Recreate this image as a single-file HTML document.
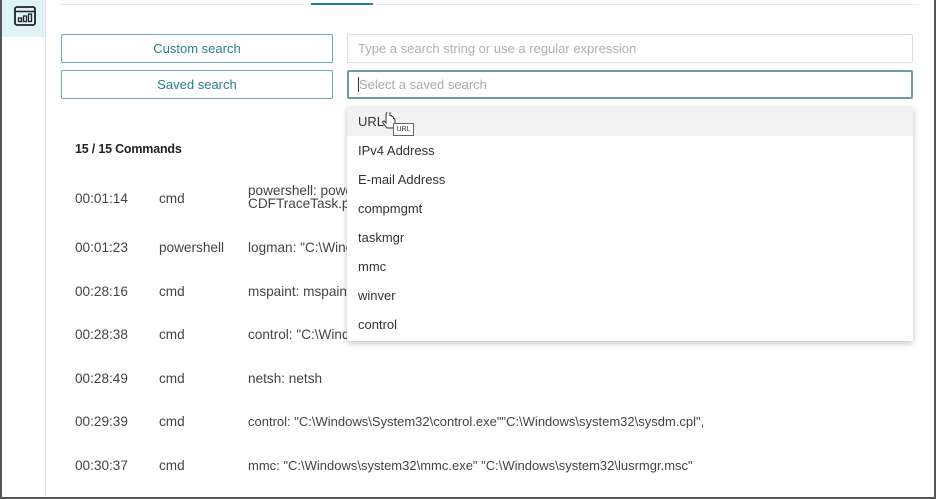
<!DOCTYPE html>
<html><head><meta charset="utf-8"><style>
*{box-sizing:border-box;margin:0;padding:0}
body{width:936px;height:499px;overflow:hidden;background:#fff;font-family:"Liberation Sans",sans-serif;position:relative;color:#333}
.frame{position:absolute;left:0;top:0;width:936px;height:499px;border-left:2px solid #555;border-right:2px solid #555;border-bottom:2px solid #555}
.side{position:absolute;left:2px;top:0;width:44px;height:497px;border-right:1px solid #e4e4e4}
.sideact{position:absolute;left:2px;top:0;width:43px;height:37px;background:#dff4f5}
.tabline{position:absolute;left:61px;top:4px;width:858px;height:1px;background:#e8e8e8}
.tabact{position:absolute;left:311px;top:3px;width:62px;height:2px;background:#1f7f8c}
.btn{position:absolute;left:61px;width:272px;height:29px;border:1px solid #6aaab2;border-radius:2px;color:#2a7f8a;font-size:13px;text-align:center;line-height:27px}
.inp{position:absolute;left:347px;width:566px;height:29px;border:1px solid #ddd;border-radius:2px;color:#b0b0b0;font-size:13px;line-height:27px;padding-left:10px}
.t{position:absolute;font-size:13.6px;color:#444}
.dd{position:absolute;left:347px;top:107px;width:566px;height:234px;background:#fff;box-shadow:0 2px 6px rgba(0,0,0,.25)}
.dd div{height:29px;line-height:29px;padding-left:11px;font-size:13px;color:#333}
</style></head><body>
<div class="side"></div>
<div class="sideact"></div>
<svg style="position:absolute;left:14px;top:6px" width="22" height="20" viewBox="0 0 22 20"><rect x="1" y="1" width="20" height="18" rx="2" fill="none" stroke="#222" stroke-width="1.8"/><line x1="1" y1="5.5" x2="21" y2="5.5" stroke="#222" stroke-width="1.5"/><rect x="4.5" y="12" width="3" height="3.5" fill="none" stroke="#222" stroke-width="1.3"/><rect x="9.5" y="10" width="3" height="5.5" fill="none" stroke="#222" stroke-width="1.3"/><rect x="14.5" y="8" width="3" height="7.5" fill="none" stroke="#222" stroke-width="1.3"/></svg>
<div class="tabline"></div><div class="tabact"></div>
<div class="btn" style="top:34px">Custom search</div>
<div class="btn" style="top:70px">Saved search</div>
<div class="inp" style="top:34px">Type a search string or use a regular expression</div>
<div class="inp" style="top:70px;border:2px solid #6a9ea4;line-height:25px;color:#aaa"><span style="border-left:1px solid #333;margin-left:-1px"></span>Select a saved search</div>
<div class="t" style="left:75px;top:142px;font-weight:bold;color:#222;font-size:12.5px;letter-spacing:-0.2px">15 / 15 Commands</div>
<div class="t" style="left:75px;top:191px">00:01:14</div><div class="t" style="left:159px;top:191px">cmd</div><div class="t" style="left:248px;top:184px;line-height:13px">powershell: powershell<br>CDFTraceTask.ps1</div>
<div class="t" style="left:75px;top:240px">00:01:23</div><div class="t" style="left:159px;top:240px">powershell</div><div class="t" style="left:248px;top:240px">logman: "C:\Windows</div>
<div class="t" style="left:75px;top:284px">00:28:16</div><div class="t" style="left:159px;top:284px">cmd</div><div class="t" style="left:248px;top:284px">mspaint: mspaint</div>
<div class="t" style="left:75px;top:327px">00:28:38</div><div class="t" style="left:159px;top:327px">cmd</div><div class="t" style="left:248px;top:327px">control: "C:\Windows</div>
<div class="t" style="left:75px;top:371px">00:28:49</div><div class="t" style="left:159px;top:371px">cmd</div><div class="t" style="left:248px;top:371px">netsh: netsh</div>
<div class="t" style="left:75px;top:414px">00:29:39</div><div class="t" style="left:159px;top:414px">cmd</div><div class="t" style="left:248px;top:414px;font-size:13px">control: "C:\Windows\System32\control.exe""C:\Windows\system32\sysdm.cpl",</div>
<div class="t" style="left:75px;top:458px">00:30:37</div><div class="t" style="left:159px;top:458px">cmd</div><div class="t" style="left:248px;top:458px;font-size:13px">mmc: "C:\Windows\system32\mmc.exe" "C:\Windows\system32\lusrmgr.msc"</div>
<div class="dd">
<div style="background:#f2f2f2">URL</div><div>IPv4 Address</div><div>E-mail Address</div><div>compmgmt</div><div>taskmgr</div><div>mmc</div><div>winver</div><div>control</div>
</div>
<svg style="position:absolute;left:381px;top:112px" width="16" height="20" viewBox="0 0 16 20"><path d="M5 2 v9 l-2-2 q-2 0 -1 2 l4 5 h6 l2-4 v-4 q0-1.5-1.5-1.5 v-0.5 q0-1.5-1.5-1.5 q-0.5-1.5-2-1 v-3 q0-1.5-2-1.5 q-1 0-1 1.5z" fill="#fff" stroke="#333" stroke-width="1"/></svg>
<div style="position:absolute;left:393px;top:123px;width:21px;height:13px;border:1px solid #666;background:#fff;font-size:7px;line-height:11px;text-align:center;color:#333">URL</div>
<div class="frame"></div>
</body></html>
